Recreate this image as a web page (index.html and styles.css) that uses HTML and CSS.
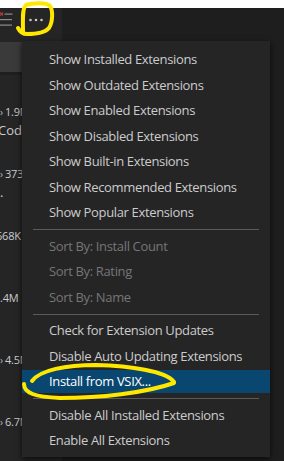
FILE: index.html
```html
<!DOCTYPE html>
<html>
<head>
<meta charset="utf-8">
<link rel="stylesheet" href="styles.css">
</head>
<body>
<div class="screen">
  <div class="topstrip"></div>
  <div class="toolbar">
    <div class="actions">
      <svg class="clear-icon" width="13" height="16" viewBox="0 0 13 16">
        <path d="M0 0.5 L3 3.5 M3 0.5 L0 3.5" stroke="#b0413e" stroke-width="1.2" fill="none"/>
        <rect x="4.5" y="1.5" width="8" height="1.2" fill="#8c8c8c"/>
        <rect x="0" y="7" width="12" height="1.2" fill="#8c8c8c"/>
        <rect x="0" y="12.5" width="12" height="1.2" fill="#8c8c8c"/>
      </svg>
      <svg class="more-icon" width="14" height="4" viewBox="0 0 14 4">
        <circle cx="1.5" cy="2" r="1.3" fill="#c5c5c5"/>
        <circle cx="7" cy="2" r="1.3" fill="#c5c5c5"/>
        <circle cx="12.5" cy="2" r="1.3" fill="#c5c5c5"/>
      </svg>
    </div>
    <div class="tabs"></div>
  </div>
  <div class="main">
    <aside class="sidebar">
      <div class="search"></div>
      <div class="divider"></div>
      <ul class="ext-list">
        <li class="ext"><span class="stat"><span class="dl">›</span>1.9M</span><span class="desc shift-code">Code</span></li>
        <li class="ext"><span class="stat"><span class="dl">›</span>373</span><span class="desc">.</span></li>
        <li class="ext"><span class="stat shift"><span class="dl">›</span>668K</span><span class="desc"></span></li>
        <li class="ext"><span class="stat shift2"><span class="dl">›</span>3.4M</span><span class="desc"></span></li>
        <li class="ext"><span class="stat"><span class="dl">›</span>4.5M</span><span class="desc"></span></li>
        <li class="ext"><span class="stat"><span class="dl">›</span>6.7M</span><span class="desc"></span></li>
      </ul>
    </aside>
    <div class="editor"></div>
  </div>

  <div class="menu">
    <div class="item">Show Installed Extensions</div>
    <div class="item">Show Outdated Extensions</div>
    <div class="item">Show Enabled Extensions</div>
    <div class="item">Show Disabled Extensions</div>
    <div class="item">Show Built-in Extensions</div>
    <div class="item">Show Recommended Extensions</div>
    <div class="item">Show Popular Extensions</div>
    <div class="sep"></div>
    <div class="item disabled">Sort By: Install Count</div>
    <div class="item disabled">Sort By: Rating</div>
    <div class="item disabled">Sort By: Name</div>
    <div class="sep"></div>
    <div class="item">Check for Extension Updates</div>
    <div class="item">Disable Auto Updating Extensions</div>
    <div class="item active">Install from VSIX...</div>
    <div class="sep"></div>
    <div class="item">Disable All Installed Extensions</div>
    <div class="item">Enable All Extensions</div>
  </div>

  <svg class="marks" width="284" height="461" viewBox="0 0 284 461">
    <path d="M18 28 C20 32, 22 34, 27 34 C35 34, 45 33, 49 28 C53 22, 53 10, 50 6 C46 2, 32 3, 26 5 C22 8, 23 20, 23 32" />
    <path d="M174 382 C166 371, 130 366, 96 365 C66 365, 40 370, 32 381" />
    <path d="M24 384 C24 393, 35 397, 60 398 C100 398, 145 393, 174 383" />
  </svg>
</div>
</body>
</html>
```

FILE: styles.css
```css
* { box-sizing: border-box; }

body {
  margin: 0;
  background: #1e1e1e;
  font-family: "Open Sans", "Noto Sans", sans-serif;
}

.screen {
  position: relative;
  width: 284px;
  height: 461px;
  overflow: hidden;
  background: #1e1e1e;
}

.topstrip {
  height: 8px;
  background: #ffffff;
}

.toolbar {
  display: flex;
  height: 32px;
}

.actions {
  width: 62px;
  background: #252526;
  display: flex;
  align-items: flex-start;
}

.clear-icon {
  margin-top: 4px;
  flex: none;
}

.more-icon {
  margin-top: 9.5px;
  margin-left: 16px;
  flex: none;
}

.tabs {
  flex: 1;
  background: #1e1e1e;
}

.main {
  display: flex;
  height: 421px;
}

.sidebar {
  width: 62px;
  background: #252526;
  overflow: hidden;
}

.search {
  margin-top: 2px;
  height: 30px;
  background: #3a3a3a;
}

.divider {
  height: 3px;
  background: #1f1f1f;
}

.ext-list {
  list-style: none;
  margin: 18px 0 0;
  padding: 0;
}

.ext {
  height: 62px;
  padding-top: 10px;
  display: flex;
  flex-direction: column;
  color: #cccccc;
  white-space: nowrap;
}

.stat {
  height: 18px;
  line-height: 18px;
  font-size: 11px;
  letter-spacing: -0.2px;
}

.stat.shift { margin-left: -9px; }
.stat.shift2 { margin-left: -11px; }

.dl {
  display: inline-block;
  width: 5px;
  font-size: 10px;
  color: #bbbbbb;
}

.desc {
  height: 18px;
  line-height: 18px;
  font-size: 13px;
}

.desc.shift-code { margin-left: -2px; }

.editor {
  flex: 1;
  background: #1e1e1e;
}

.menu {
  position: absolute;
  left: 22px;
  top: 41px;
  width: 248px;
  padding: 6px 0 3px;
  background: #252526;
  box-shadow: 0 2px 6px rgba(0, 0, 0, 0.7);
  display: flex;
  flex-direction: column;
}

.item {
  height: 23px;
  margin: 1.25px 0;
  padding-left: 27px;
  line-height: 23px;
  font-size: 13px;
  letter-spacing: -0.35px;
  color: #cccccc;
  white-space: nowrap;
}

.item.disabled {
  color: #767676;
}

.item.active {
  background: #094771;
  color: #ffffff;
}

.sep {
  height: 1px;
  margin: 3.5px 11px;
  background: #5a5a5a;
}

.marks {
  position: absolute;
  left: 0;
  top: 0;
  pointer-events: none;
}

.marks path {
  fill: none;
  stroke: #ffe800;
  stroke-width: 4;
  stroke-linecap: round;
  stroke-linejoin: round;
}
```
